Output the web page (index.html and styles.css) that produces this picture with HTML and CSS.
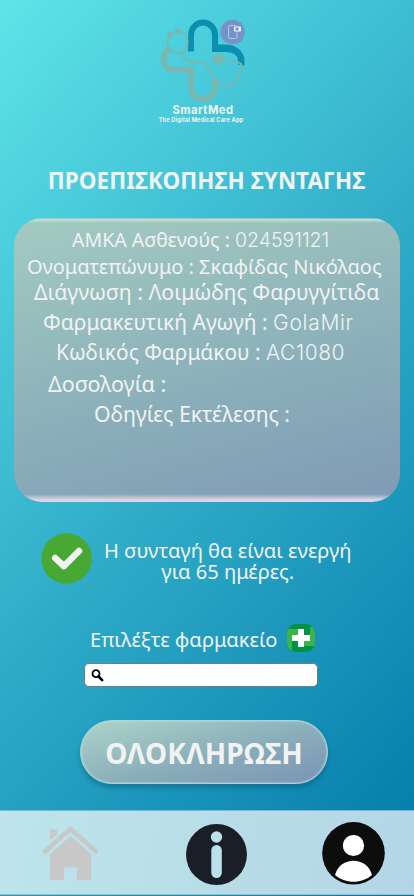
FILE: index.html
```html
<!DOCTYPE html>
<html lang="el">
<head>
<meta charset="utf-8">
<meta name="viewport" content="width=device-width, initial-scale=1">
<title>SmartMed</title>
<link rel="stylesheet" href="styles.css">
</head>
<body>
<div class="app">
  <header class="brand">
    <svg class="logo" width="90" height="86" viewBox="158 17 90 86" fill="none">
      <path d="M187.800 51.500h6.200V34.500a9 9 0 0 1 18 0V52h13q12 0 13 8v4.500l6.500 1V60q-2-14-18-15.500h-8.500V34.500a14.900 14.900 0 0 0-29.800 0v11z" fill="#0b8fb1"/>
      <path d="M168.500 49.500c-8 6-6 20.500 6 20.500h16.500V87.500a12 12 0 0 0 24 0q0-5-1.500-8" stroke="#79b7b1" stroke-width="6"/>
      <g stroke="#79b7b1" stroke-width="2">
        <path d="M170.500 35c-6 6-4 18 11 18.500 9-5 8-22-4-23"/>
        <path d="M181 53c5 11 14 10 22 9.500 8 2 9 23 25 23 9-1 12-12 13.500-20q0-5-23-6.500"/>
      </g>
      <circle cx="170.500" cy="34.500" r="3" fill="#79b7b1"/><circle cx="177.500" cy="31.500" r="3" fill="#79b7b1"/>
      <circle cx="218" cy="59" r="5.700" fill="#79b7b1"/>
      <circle cx="232.700" cy="32" r="12.200" fill="#7693c8"/>
      <rect x="228.500" y="25.500" width="8.500" height="13" rx="1.500" stroke="#a9c9e4"/>
      <rect x="234" y="26.500" width="7" height="5" rx="1" fill="#eef6fa"/>
      <path d="M237 27v4M235 29h4" stroke="#5576b4"/>
    </svg>
    <div class="brand-name">SmartMed</div>
    <div class="brand-tag">The Digital Medical Care App</div>
  </header>
  <h1>ΠΡΟΕΠΙΣΚΟΠΗΣΗ ΣΥΝΤΑΓΗΣ</h1>
  <section class="card">
    <p class="amka"><span>ΑΜΚΑ Ασθενούς : <span class="latin">024591121</span></span></p>
    <p class="name"><span>Ονοματεπώνυμο : Σκαφίδας Νικόλαος</span></p>
    <p class="diagnosis"><span>Διάγνωση : Λοιμώδης Φαρυγγίτιδα</span></p>
    <p class="treatment"><span>Φαρμακευτική Αγωγή : <span class="latin">GolaMir</span></span></p>
    <p class="code"><span>Κωδικός Φαρμάκου : <span class="latin">AC1080</span></span></p>
    <p class="dose"><span>Δοσολογία :</span></p>
    <p class="notes"><span>Οδηγίες Εκτέλεσης :</span></p>
  </section>
  <section class="status">
    <svg width="51" height="51" viewBox="0 0 51 51"><circle cx="25.700" cy="25.500" r="25.300" fill="#47a834"/><path d="M14.200 25l8.600 8.200L38 18" fill="none" stroke="#f2f2f2" stroke-width="6.500" stroke-linecap="round" stroke-linejoin="round"/></svg>
    <div class="status-text"><p>Η συνταγή θα είναι ενεργή</p><p>για 65 ημέρες.</p></div>
  </section>
  <section class="pharmacy">
    <div class="pharmacy-label">
      <span>Επιλέξτε φαρμακείο</span>
      <svg width="28" height="28" viewBox="0 0 28 28"><defs><clipPath id="r"><rect width="28" height="28" rx="9"/></clipPath></defs><g clip-path="url(#r)"><path fill="#009245" d="M0 0h28v28H0z"/><path fill="#39b54a" d="M0 5h11v6h-6v15H0zM23 3h5v19H17v-5h6z"/></g><path fill="#fff" d="M11 5h6v6h6v6h-6v6h-6v-6H5v-6h6z"/></svg>
    </div>
    <div class="search"><svg width="14" height="14" viewBox="0 0 14 14" fill="none" stroke="#000"><circle cx="5" cy="4.700" r="3.500" stroke-width="1.800"/><path d="M7.500 7.500l3.700 3.700" stroke-width="2.600" stroke-linecap="round"/></svg></div>
  </section>
  <button class="done">ΟΛΟΚΛΗΡΩΣΗ</button>
  <nav>
    <svg class="home" width="57" height="55" viewBox="0 0 57 55" fill="#c8c8c8"><path d="M8 3.500h7v5L8 14.500zM28.500 0L57 25l-3 3.500L28.500 6 3 28.500 0 25z"/><path d="M28.500 10L49 28v26H35V41.500H22V54H8V28z"/></svg>
    <svg class="info" width="61" height="61" viewBox="0 0 61 61"><circle cx="30.500" cy="30.500" r="30.500" fill="#1a1e27"/><circle cx="30.500" cy="13" r="5.700" fill="#bae0e9"/><rect x="25.300" y="21" width="10.500" height="33" rx="5.200" fill="#bae0e9"/></svg>
    <svg class="user" width="63" height="63" viewBox="0 0 63 63"><circle cx="31.500" cy="31.300" r="31.300" fill="#0d0d0d"/><circle cx="31.500" cy="23.500" r="10.600" fill="#fff"/><path d="M13 53c5-19 32-19 37 0-10 9-27 9-37 0z" fill="#fff"/></svg>
  </nav>
</div>
</body>
</html>
```
FILE: styles.css
```css
* { box-sizing: border-box; }
body { margin: 0; }
h1, p { margin: 0; font-weight: 400; }
svg { display: block; flex: none; }
.app {
  width: 414px; height: 896px; overflow: hidden;
  display: flex; flex-direction: column; align-items: center;
  background: linear-gradient(132deg, #5de5e9 0%, #2fabc8 50%, #0079a8 100%);
  color: #f2f2f2; font-family: "Noto Sans", sans-serif;
}
.latin { font-family: Inter, "Noto Sans", sans-serif; font-weight: 300; }
.brand { height: 130px; padding-top: 17px; display: flex; flex-direction: column; align-items: center; margin-left: -8px; flex: none; }
.brand-name { font: 700 11.2px/14px Inter, sans-serif; letter-spacing: .5px; }
.brand-tag { font: 700 5.6px/6px Inter, sans-serif; letter-spacing: .2px; margin-right: 4px; white-space: nowrap; }
h1 { flex: none; height: 88px; padding: 36px 1px 0 0; font-size: 22.400px; line-height: 30px; font-weight: 700; letter-spacing: .1px; white-space: nowrap; }
.card {
  flex: none; width: 386px; height: 284px; padding-top: 7px; border-radius: 28px;
  background:
    linear-gradient(to bottom, transparent 1px, #c4e6d6 1px, rgba(196, 230, 214, 0) 5px) top / 100% 5px no-repeat,
    linear-gradient(to top, #ded6e7 2px, rgba(222, 214, 231, 0) 8px) bottom / 100% 8px no-repeat,
    linear-gradient(165deg, #a3cbc0 0%, #89aeba 60%, #809ab4 100%);
}
.card p { display: flex; height: 30px; line-height: 30px; white-space: nowrap; }
.card .amka { padding-left: 58px; height: 27px; font-size: 19.500px; }
.card .name { padding-left: 13px; height: 25px; font-size: 20px; }
.card .diagnosis { padding-left: 20px; font-size: 21.200px; }
.card .treatment { padding-left: 29px; font-size: 21px; }
.card .treatment .latin { letter-spacing: .7px; }
.card .code { padding-left: 42px; height: 32px; font-size: 20.900px; }
.card .code .latin { letter-spacing: .6px; }
.card .dose { padding-left: 34px; font-size: 21.500px; }
.card .notes { padding-left: 80px; font-size: 21.200px; }
.status { flex: none; width: 414px; height: 91px; margin-top: 31px; padding-left: 41px; display: flex; gap: 12px; }
.status-text { padding-top: 7px; text-align: center; white-space: nowrap; }
.status p { font-size: 20.100px; line-height: 21px; }
.pharmacy { flex: none; width: 234px; margin-right: 12px; }
.pharmacy-label { display: flex; justify-content: space-between; height: 39px; padding: 0 3px 0 6px; line-height: 32px; font-size: 20.100px; white-space: nowrap; }
.search { height: 24px; padding: 5px 6px; border: 1px solid #6f7d83; border-radius: 5px; background: #fff; }
.done {
  flex: none; width: 248px; height: 64px; margin: 33px 6px 0 0; padding: 2px 0 0; border: 1px solid #a9d5d9; border-radius: 32px;
  background: linear-gradient(165deg, #acd4c8 0%, #89aeba 55%, #7b94b5 100%);
  box-shadow: 0 4px 4px rgba(0, 60, 90, .3), inset 0 0 2px #d8e7ee;
  color: #f2f2f2; font: 700 28px/60px "Noto Sans", sans-serif; letter-spacing: .1px;
}
nav {
  flex: none; width: 414px; height: 85px; margin-top: 26px; padding: 11px 29px 0 42px; display: flex; justify-content: space-between;
  border-top: 1px solid #7fb6c8; border-bottom: 1px solid #a9b9c1;
  background: linear-gradient(105deg, #bde5eb, #b3d6e6);
}
.home { margin-top: 4px; }
.info { margin: 2px 0 0 12px; }
```
